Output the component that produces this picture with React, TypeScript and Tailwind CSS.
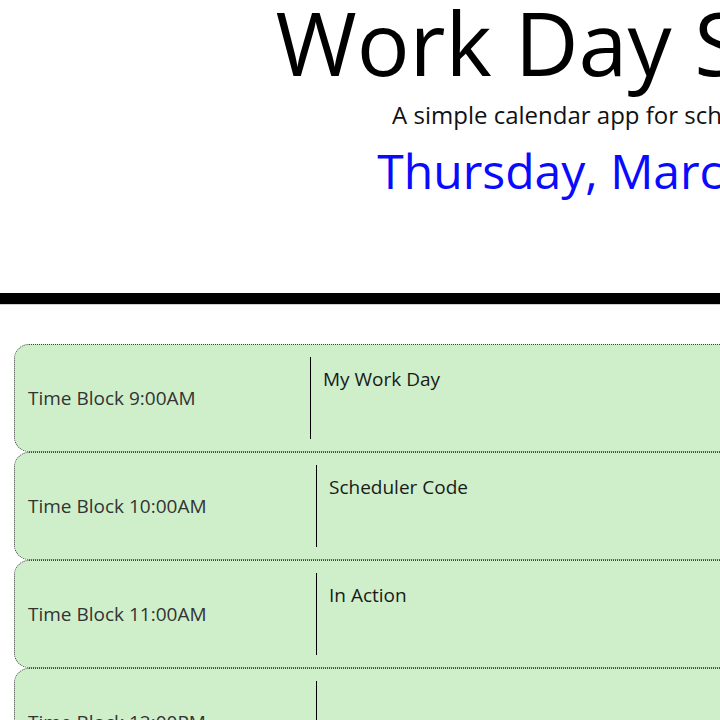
import React from "react";

const rows = [
  { label: "Time Block 9:00AM", text: "My Work Day", w: "w-[295px]" },
  { label: "Time Block 10:00AM", text: "Scheduler Code", w: "w-[301px]" },
  { label: "Time Block 11:00AM", text: "In Action", w: "w-[301px]" },
  { label: "Time Block 12:00PM", text: "", w: "w-[301px]" },
  { label: "Time Block 1:00PM", text: "", w: "w-[295px]" },
];

export default function App() {
  return (
    <div className="w-[1379px] bg-white font-['Open_Sans','Noto_Sans',sans-serif] text-black">
      <header className="text-center border-b-[11px] border-black pb-[94px]">
        <h1 className="text-[88px] leading-[84px] font-normal">Work Day Scheduler</h1>
        <p className="mt-[15px] pr-[17px] text-[24px] leading-[32px] text-[#111]">
          A simple calendar app for scheduling your work day
        </p>
        <p className="mt-[12px] pr-[75px] text-[48px] leading-[56px] text-[#0a0aff]">
          Thursday, March 2, 2023
        </p>
      </header>
      <div className="h-px bg-[#cfcfcf]" />
      <main className="px-[14px] pt-[39px]">
        {rows.map((r) => (
          <div
            key={r.label}
            className="flex items-center h-[108px] rounded-[15px] border border-dotted border-[#444] bg-[#cfefcb]"
          >
            <div className={`${r.w} shrink-0 pl-[13px] text-[19px] text-[#333]`}>{r.label}</div>
            <div className="flex-1 h-[82px] border-l border-black pl-[12px] pt-[8px] text-[19px] text-[#1a1a1a]">
              {r.text}
            </div>
          </div>
        ))}
      </main>
    </div>
  );
}
